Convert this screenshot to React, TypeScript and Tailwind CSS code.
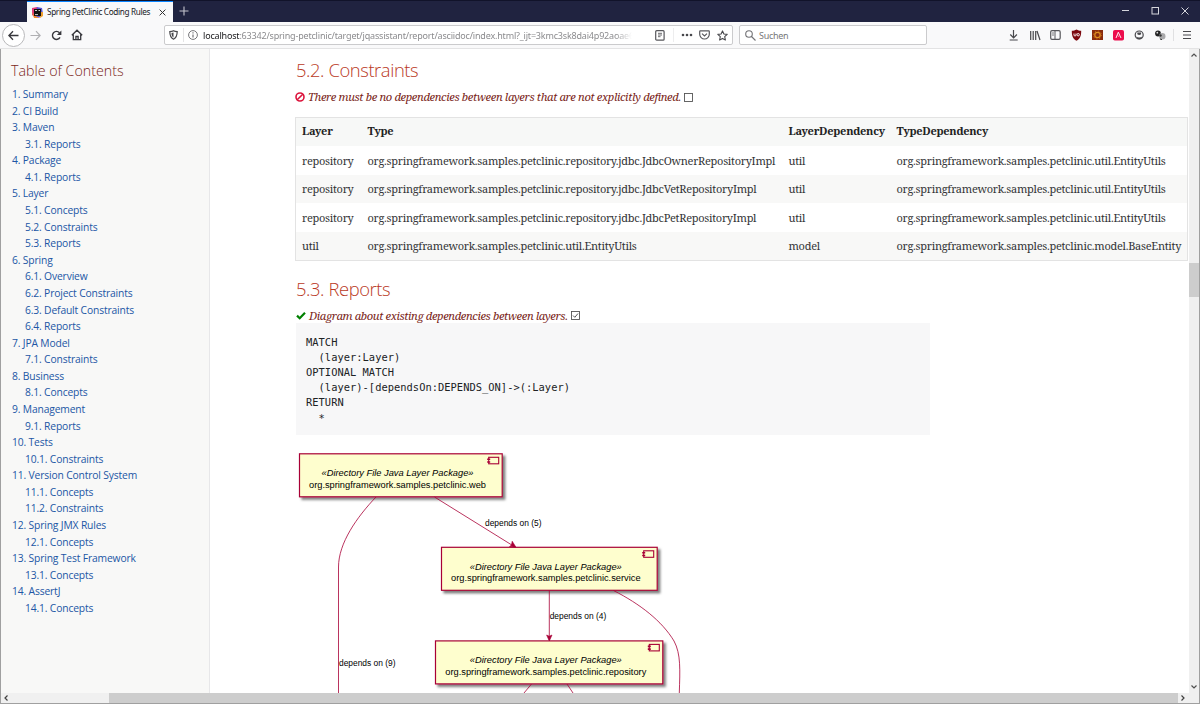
import React from "react";

const toc: [number, string][] = [
  [1, "1. Summary"], [1, "2. CI Build"], [1, "3. Maven"], [2, "3.1. Reports"],
  [1, "4. Package"], [2, "4.1. Reports"], [1, "5. Layer"], [2, "5.1. Concepts"],
  [2, "5.2. Constraints"], [2, "5.3. Reports"], [1, "6. Spring"], [2, "6.1. Overview"],
  [2, "6.2. Project Constraints"], [2, "6.3. Default Constraints"], [2, "6.4. Reports"],
  [1, "7. JPA Model"], [2, "7.1. Constraints"], [1, "8. Business"], [2, "8.1. Concepts"],
  [1, "9. Management"], [2, "9.1. Reports"], [1, "10. Tests"], [2, "10.1. Constraints"],
  [1, "11. Version Control System"], [2, "11.1. Concepts"], [2, "11.2. Constraints"],
  [1, "12. Spring JMX Rules"], [2, "12.1. Concepts"], [1, "13. Spring Test Framework"],
  [2, "13.1. Concepts"], [1, "14. AssertJ"], [2, "14.1. Concepts"],
];

const pkg = "org.springframework.samples.petclinic.";
const rows = [
  ["repository", pkg + "repository.jdbc.JdbcOwnerRepositoryImpl", "util", pkg + "util.EntityUtils"],
  ["repository", pkg + "repository.jdbc.JdbcVetRepositoryImpl", "util", pkg + "util.EntityUtils"],
  ["repository", pkg + "repository.jdbc.JdbcPetRepositoryImpl", "util", pkg + "util.EntityUtils"],
  ["util", pkg + "util.EntityUtils", "model", pkg + "model.BaseEntity"],
];

const cypher = `MATCH
  (layer:Layer)
OPTIONAL MATCH
  (layer)-[dependsOn:DEPENDS_ON]->(:Layer)
RETURN
  *`;

function TitleBar() {
  return (
    <div className="flex h-[22px] shrink-0 border-t border-[#11132a] bg-[#202340] text-[#d5d6dc]">
      <div className="ml-[27px] flex w-[146px] items-center border-t border-[#0a84ff] bg-[#f9f9fa] pl-[5px]">
        <svg className="h-[11px] w-[11px]" viewBox="0 0 11 11">
          <path d="M0 1 5 0l2 3-3 8-4-3z" fill="#e33b7a" />
          <path d="M5 0l5 1 1 6-4 4-4-2z" fill="#5a55d8" />
          <path d="M0 5l3 4 5 2-6 0z" fill="#f28a2a" />
          <path d="M8 5h3v4l-3 2z" fill="#f0a030" />
          <rect x="2" y="2" width="7" height="7" fill="#111" />
          <path d="M3 3.5h2M6.5 3.5h1.5M3 7.6h3" stroke="#fff" strokeWidth=".8" />
        </svg>
        <span className="ml-1 w-[103px] whitespace-nowrap font-['Noto_Sans'] text-[8.2px] tracking-[-0.33px] text-[#18181c]">Spring PetClinic Coding Rules</span>
        <svg className="ml-[9px] h-[7px] w-[7px]" viewBox="0 0 7 7"><path d="M.6.6l5.8 5.8M6.4.6L.6 6.4" stroke="#333" strokeWidth="1" /></svg>
      </div>
      <svg className="ml-[6px] mt-[5px] h-[10px] w-[10px]" viewBox="0 0 10 10"><path d="M5 .5v9M.5 5h9" stroke="#c3c4cc" strokeWidth="1.1" /></svg>
      <svg className="ml-auto mr-[11px] mt-[6px] h-2 w-[68px]" viewBox="0 0 68 8" fill="none" stroke="#d5d6dc">
        <path d="M1 3.5h7M60.500.5l7 7M67.500.5l-7 7" /><rect x="31" y=".5" width="6.500" height="6.500" />
      </svg>
    </div>
  );
}

function NavBar() {
  return (
    <div className="flex h-[27px] shrink-0 items-center border-b border-[#e3e3e4] bg-[#f9f9fa] font-['Noto_Sans'] text-[#3c3c40]">
      <div className="ml-[2px] flex h-[23px] w-[23px] items-center justify-center rounded-full border border-[#b9b9bb] bg-white">
        <svg className="h-[11px] w-[11px]" viewBox="0 0 11 11" fill="none" stroke="#38383d" strokeWidth="1.3"><path d="M10.500 5.500H1M5 1.200L.9 5.500 5 9.800" /></svg>
      </div>
      <svg className="ml-[5px] h-[11px] w-[11px]" viewBox="0 0 11 11" fill="none" stroke="#b0b0b3" strokeWidth="1.200"><path d="M.5 5.500H10M6 1.200l4.100 4.300L6 9.800" /></svg>
      <svg className="ml-[10px] h-[11px] w-[11px]" viewBox="0 0 11 11"><path d="M9 7.300A4 4 0 1 1 8.500 2.800" fill="none" stroke="#38383d" strokeWidth="1.400" /><path d="M10.400.5v4.500H5.900z" fill="#38383d" /></svg>
      <svg className="ml-[9px] h-[12px] w-[12px]" viewBox="0 0 12 12" fill="none" stroke="#38383d" strokeWidth="1.300"><path d="M.8 6.300L6 1.200l5.200 5.100M2.300 5.500v5.200h7.400V5.500M4.900 10.700V7.500h2.200v3.200" /></svg>

      <div className="ml-[81px] flex h-[20px] w-[569px] shrink-0 items-center rounded-[2px] border border-[#cbcbcd] bg-white">
        <svg className="ml-1 h-[10px] w-[9px]" viewBox="0 0 9 10"><path d="M4.500.7c1.200.7 2.400.9 3.700.9 0 4-.6 6.200-3.700 7.600C1.400 7.800.8 5.600.8 1.600c1.300 0 2.500-.2 3.700-.9z" fill="none" stroke="#48484c" strokeWidth="1.200" /><path d="M4.500 2.500v5C3 6.600 2.500 5.300 2.500 3z" fill="#48484c" /></svg>
        <div className="ml-[5px] h-[14px] w-px bg-[#e4e4e5]" />
        <svg className="ml-[4px] h-[10px] w-[10px]" viewBox="0 0 10 10" fill="none" stroke="#66666a"><circle cx="5" cy="5" r="4.400" strokeWidth=".9" /><path d="M5 4.400v3M5 2.300v1.100" strokeWidth="1.100" /></svg>
        <div className="ml-[5px] mt-px w-[429px] overflow-hidden whitespace-nowrap text-[9px] tracking-[-0.185px] text-[#8b8b8e] [mask-image:linear-gradient(to_right,black_96%,transparent)]">
          <span className="text-[#17171a]">localhost</span>:63342/spring-petclinic/target/jqassistant/report/asciidoc/index.html?_ijt=3kmc3sk8dai4p92aoae6b
        </div>
        <svg className="ml-[23px] h-[11px] w-[10px]" viewBox="0 0 10 11" fill="none" stroke="#58585c"><rect x=".7" y=".7" width="8.400" height="9.500" rx="1" strokeWidth="1.200" /><path d="M3 3.300h4M3 5h4M3 6.700h2.500" strokeWidth=".9" /></svg>
        <div className="ml-[8px] h-[14px] w-px bg-[#ededee]" />
        <svg className="ml-[7px] h-[4px] w-[12px]" viewBox="0 0 12 4" fill="#48484c"><circle cx="2" cy="2" r="1.300" /><circle cx="6" cy="2" r="1.300" /><circle cx="10" cy="2" r="1.300" /></svg>
        <svg className="ml-[6px] h-[10px] w-[11px]" viewBox="0 0 11 10" fill="none" stroke="#58585c" strokeWidth="1.200"><path d="M1.300.8h8.400q.6 0 .6.600v2.900a4.800 4.700 0 0 1-9.600 0V1.400q0-.6.600-.6z" /><path d="M3 3.600l2.500 2.300L8 3.600" /></svg>
        <svg className="ml-[7px] h-[11px] w-[11px]" viewBox="0 0 11 11" fill="none" stroke="#48484c" strokeWidth="1.100"><path d="M5.500.9l1.400 3.100 3.300.4-2.500 2.300.7 3.300-2.900-1.600L2.600 10l.7-3.300L.8 4.400l3.300-.4z" strokeLinejoin="round" /></svg>
      </div>
      <div className="ml-[6px] flex h-[20px] w-[188px] shrink-0 items-center rounded-[2px] border border-[#cbcbcd] bg-white">
        <svg className="ml-[5px] h-[11px] w-[11px]" viewBox="0 0 11 11" fill="none" stroke="#727276" strokeWidth="1.100"><circle cx="4" cy="4" r="3.300" /><path d="M6.500 6.500l4 4" /></svg>
        <span className="ml-[3px] mt-px text-[9px] tracking-[-0.3px] text-[#77777a]">Suchen</span>
      </div>

      <svg className="ml-[82px] h-[12px] w-[190px] shrink-0" viewBox="1009 29 190 12" fill="none">
        <path d="M1013.500 30v7.500M1010.300 34.500l3.300 3.300 3.300-3.300M1009.700 40h8" stroke="#48484c" strokeWidth="1.200" />
        <path d="M1030.700 31v9M1033.200 31v9M1035.700 31v9M1037 31l3 9" stroke="#48484c" strokeWidth="1.200" />
        <rect x="1050.700" y="30.700" width="9.500" height="8.600" rx="1.300" stroke="#58585c" strokeWidth="1.200" /><path d="M1055 31v8" stroke="#58585c" /><path d="M1052 33h2M1052 35h2" stroke="#58585c" strokeWidth=".8" />
        <path d="M1076.500 29.500c1.500.9 3 1.200 4.700 1.200 0 5-.8 7.900-4.700 10.100-3.900-2.200-4.700-5.100-4.700-10.100 1.700 0 3.200-.3 4.700-1.200z" fill="#7c0910" />
        <path d="M1074 33.500v1.500q0 1 1 1t1-1v-1.500" stroke="#fff" strokeWidth=".9" /><circle cx="1078.200" cy="34.700" r="1.200" stroke="#fff" strokeWidth=".9" />
        <path d="M1092 30h11v10h-11z" fill="#8a2b0c" /><circle cx="1097.500" cy="35" r="2.700" stroke="#e09020" strokeWidth="1.200" /><circle cx="1097.500" cy="35" r="4" stroke="#c87018" strokeWidth="1" strokeDasharray="1.200 1.940" />
        <rect x="1113" y="30" width="11" height="10.500" rx="1.800" fill="#ec0d4d" /><path d="M1116 38l2.300-5.800 2.700 5.800M1117.800 35.500l.8 1" stroke="#fff" strokeWidth=".9" />
        <circle cx="1139.200" cy="35" r="4" stroke="#48484c" strokeWidth="1.200" /><path d="M1136 36.500q3.200 2.200 6.400 0-.8 2.800-3.200 2.800t-3.200-2.800zM1137.300 32.400h3.800v1.800q-1.900 1.600-3.800 0z" fill="#48484c" />
        <circle cx="1158" cy="33.500" r="2.900" fill="#222" /><circle cx="1162.300" cy="36.300" r="3.200" fill="#a9a9ab" /><circle cx="1157.300" cy="32.700" r=".9" fill="#ddd" /><path d="M1160 39l2 .6" stroke="#333" /><circle cx="1160.500" cy="35.500" r="1.200" fill="#333" />
        <path d="M1173.500 29v12" stroke="#e0e0e2" /><path d="M1183 31.500h8M1183 35h8M1183 38.500h8" stroke="#48484c" strokeWidth="1.200" />
      </svg>
    </div>
  );
}

function Heading({ children }: { children: React.ReactNode }) {
  return <h2 className="whitespace-nowrap font-['Open_Sans'] text-[18.400px] font-light leading-[26px] tracking-[-0.42px] text-[#ba3925] [font-stretch:normal]">{children}</h2>;
}

function Check({ on }: { on?: boolean }) {
  return (
    <svg className="ml-[3px] h-[9px] w-[9px] shrink-0" viewBox="0 0 9 9" fill="none" stroke="#555">
      <rect x=".5" y=".5" width="8" height="8" strokeWidth=".9" />
      {on && <path d="M2 4.500l1.800 1.800L7 2.500" />}
    </svg>
  );
}

function ResultTable() {
  return (
    <table className="mt-[12px] w-[893px] table-fixed border-collapse border border-[#e3e3e3] text-[11px] tracking-[-0.275px] text-[#333436]">
      <colgroup><col className="w-[65px]" /><col className="w-[421px]" /><col className="w-[108px]" /><col /></colgroup>
      <thead className="bg-[#f7f8f7]">
        <tr className="h-[28.500px] text-left font-bold text-[#222]">
          {["Layer", "Type", "LayerDependency", "TypeDependency"].map((h) => <th key={h} className="whitespace-nowrap p-0 pb-px pl-[7px] first:pl-[6px]">{h}</th>)}
        </tr>
      </thead>
      <tbody>
        {rows.map((r, i) => (
          <tr key={i} className="h-[28.500px] bg-white even:bg-[#f8f8f7]">
            {r.map((c, j) => <td key={j} className="whitespace-nowrap p-0 pl-[7px] pt-px first:pl-[6px]">{c}</td>)}
          </tr>
        ))}
      </tbody>
    </table>
  );
}

function Node({ x, y, w, name, cx, nw }: { x: number; y: number; w: number; name: string; cx: number; nw: number }) {
  return (
    <g>
      <rect x={x} y={y} width={w} height="43" fill="#fefece" stroke="#a80036" strokeWidth="1.200" filter="url(#shade)" />
      <rect x={x + w - 13.500} y={y + 3.500} width="10" height="6.500" fill="#fefece" stroke="#a80036" strokeWidth="1.100" />
      <path d={`M${x + w - 15} ${y + 5.500}h3M${x + w - 15} ${y + 8.200}h3`} stroke="#a80036" strokeWidth="1.600" />
      <text x={cx - 76} y={y + 22.500} textLength="152" lengthAdjust="spacingAndGlyphs" fontStyle="italic">«Directory File Java Layer Package»</text>
      <text x={cx - nw / 2} y={y + 34} textLength={nw} lengthAdjust="spacingAndGlyphs">{name}</text>
    </g>
  );
}

function Diagram() {
  return (
    <svg className="mt-[5px] h-[253px] w-[640px] shrink-0" viewBox="296 440 640 253" fontFamily="Liberation Sans, sans-serif" fontSize="9.200" fill="#000">
      <defs>
        <filter id="shade" x="-5%" y="-15%" width="112%" height="140%"><feDropShadow dx="2.500" dy="2.500" stdDeviation="1.200" floodColor="#000" floodOpacity=".5" /></filter>
      </defs>
      <Node x={299.500} y={453.800} w={202.700} name={pkg + "web"} cx={397.500} nw={177} />
      <Node x={441.500} y={547.300} w={215.700} name={pkg + "service"} cx={545.800} nw={189.500} />
      <Node x={435.500} y={640.900} w={227.300} name={pkg + "repository"} cx={545.800} nw={201} />
      <g fill="none" stroke="#a80036" strokeWidth=".8">
        <path d="M376 497C357 517 338.500 543 338.500 567V693" />
        <path d="M434.500 497L515 547" />
        <path d="M549.300 590.500V640" />
        <path d="M613.500 590.500C640 604 662 621 674 641C681 654 680 670 679.300 693" />
        <path d="M531.500 684l-7.500 9M567 684l6 9" />
      </g>
      <path d="M516 547.300l-6.500-.8 2-1.500.7-3.800zM549.300 641l-2.700-6 2.700 1.200 2.700-1.200z" fill="#a80036" stroke="#a80036" strokeWidth=".6" />
      <text x="485" y="525.500" textLength="56.500" lengthAdjust="spacingAndGlyphs">depends on (5)</text>
      <text x="549.700" y="619.300" textLength="56.500" lengthAdjust="spacingAndGlyphs">depends on (4)</text>
      <text x="339" y="666" textLength="56.500" lengthAdjust="spacingAndGlyphs">depends on (9)</text>
    </svg>
  );
}

export default function App() {
  return (
    <div className="flex h-[704px] w-[1200px] flex-col overflow-hidden bg-white">
      <TitleBar />
      <NavBar />
      <div className="flex min-h-0 flex-1 flex-col border-x border-b border-[#a0a0a0]">
        <div className="flex min-h-0 flex-1">
          <nav className="w-[209px] shrink-0 border-r border-[#e7e7e9] bg-[#f8f8f7] pl-[10px] pt-[11px] font-['Open_Sans']">
            <div className="whitespace-nowrap text-[14.250px] font-light leading-[21px] text-[#7a2518]">Table of Contents</div>
            <ul className="mt-[5px] text-[10.300px] leading-[16.580px] tracking-[-0.15px] text-[#2156a5]">
              {toc.map(([l, t]) => <li key={t} className={l === 1 ? "whitespace-nowrap pl-[1px]" : "whitespace-nowrap pl-[14px]"}>{t}</li>)}
            </ul>
          </nav>
          <main className="flex min-w-0 flex-1 flex-col overflow-hidden pl-[86px] pt-[8px] font-['Noto_Serif','DejaVu_Serif_Condensed','DejaVu_Serif',serif] [font-stretch:condensed]">
            <Heading>5.2. Constraints</Heading>
            <div className="-ml-px mt-[6px] flex h-[16px] items-center">
              <svg className="h-[10px] w-[10px] shrink-0" viewBox="0 0 10 10" fill="none" stroke="#dc143c" strokeWidth="1.600"><circle cx="5" cy="5" r="4" /><path d="M2.200 7.800l5.600-5.600" /></svg>
              <span className="ml-[3px] whitespace-nowrap text-[11.200px] italic tracking-[-0.34px] text-[#7a2518]">There must be no dependencies between layers that are not explicitly defined.</span>
              <Check />
            </div>
            <div className="-ml-px"><ResultTable /></div>
            <div className="mt-[15px]"><Heading>5.3. Reports</Heading></div>
            <div className="mt-[6px] flex h-[15px] items-center">
              <svg className="h-[9px] w-[10px] shrink-0" viewBox="0 0 10 9"><path d="M1 4.600l2.700 2.600L9 1.700" fill="none" stroke="#008000" strokeWidth="2.200" /></svg>
              <span className="ml-[3px] whitespace-nowrap pt-px text-[11.200px] italic leading-[15px] tracking-[-0.36px] text-[#7a2518]">Diagram about existing dependencies between layers.</span>
              <Check on />
            </div>
            <pre className="h-[112px] w-[634px] shrink-0 bg-[#f7f7f8] pl-[10px] pt-[12px] font-['DejaVu_Sans_Mono',monospace] text-[10.400px] leading-[15.200px] tracking-[0.030px] text-[#202224]">{cypher}</pre>
            <Diagram />
          </main>
          <div className="flex w-[10px] shrink-0 flex-col items-center bg-[#f0f0f0]">
            <svg className="mt-1 h-1 w-[6px]" viewBox="0 0 6 4"><path d="M.5 3.500L3 1l2.500 2.500" fill="none" stroke="#505050" strokeWidth="1.200" /></svg>
            <div className="mt-[206px] h-[34px] w-full bg-[#cdcdcd]" />
            <svg className="mb-[4px] mt-auto h-1 w-[6px]" viewBox="0 0 6 4"><path d="M.5.5L3 3 5.500.5" fill="none" stroke="#505050" strokeWidth="1.200" /></svg>
          </div>
        </div>
        <div className="flex h-[10px] shrink-0 items-center bg-[#f0f0f0]">
          <svg className="ml-[3px] h-[6px] w-1" viewBox="0 0 4 6"><path d="M3.500.5L1 3l2.500 2.500" fill="none" stroke="#404040" strokeWidth="1.200" /></svg>
          <div className="ml-[101px] h-full w-[1069px] bg-[#cdcdcd]" />
          <svg className="ml-[3px] h-[6px] w-1" viewBox="0 0 4 6"><path d="M.5.5L3 3 .5 5.500" fill="none" stroke="#404040" strokeWidth="1.200" /></svg>
        </div>
      </div>
    </div>
  );
}
